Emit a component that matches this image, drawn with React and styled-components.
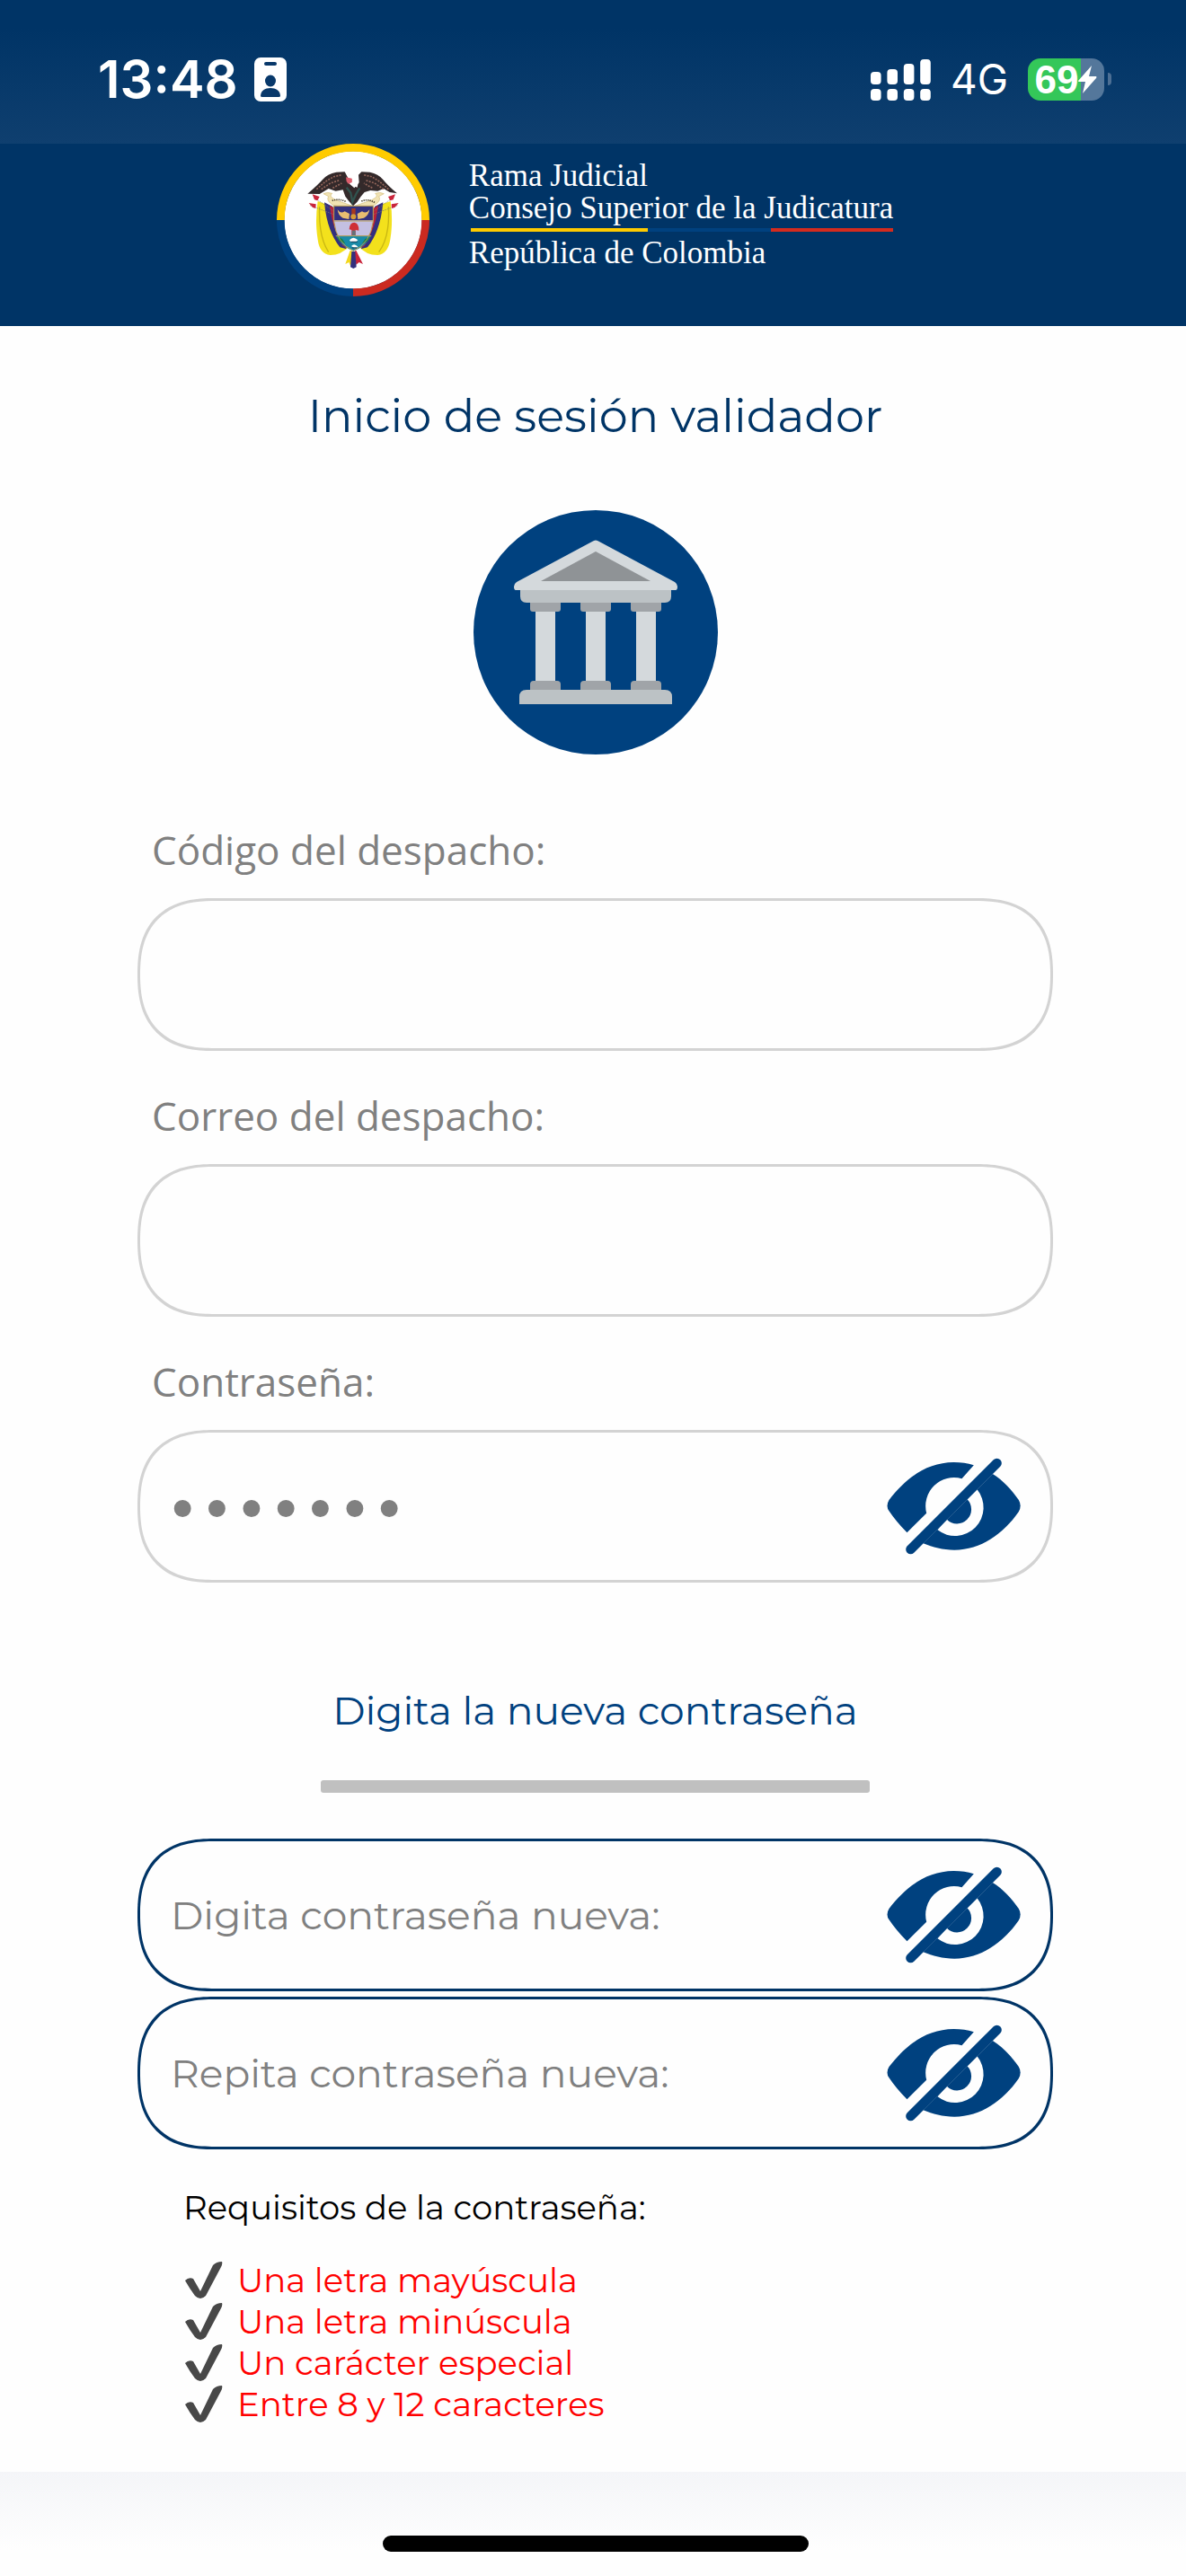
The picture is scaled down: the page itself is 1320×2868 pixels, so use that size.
import React, { useState } from "react";
import styled, { createGlobalStyle } from "styled-components";

const EstilosGlobales = createGlobalStyle`
  * {
    box-sizing: border-box;
  }

  body {
    margin: 0;
    background: #fefefe;
    font-family: Montserrat, Inter, "Liberation Sans", sans-serif;
  }
`;

const Pagina = styled.div`
  display: flex;
  flex-direction: column;
  min-height: 100vh;
`;

const BarraEstado = styled.div`
  display: flex;
  justify-content: space-between;
  align-items: center;
  height: 160px;
  padding: 16px 83px 0 109px;
  color: white;
  font-family: Inter, "Liberation Sans", sans-serif;
  background: linear-gradient(#003466 20%, #0f3f6f);
`;

const GrupoEstado = styled.div`
  display: flex;
  align-items: center;
  gap: ${({ separacion }) => separacion}px;
`;

const Hora = styled.span`
  font-size: 58px;
  font-weight: 600;
  line-height: 64px;
`;

const Red = styled.span`
  font-size: 46px;
  line-height: 56px;
`;

const Bateria = styled.div`
  display: flex;
  align-items: center;
  gap: 4px;

  &::after {
    content: "";
    width: 4px;
    height: 14px;
    border-radius: 0 4px 4px 0;
    background: #4d6f94;
  }
`;

const CuerpoBateria = styled.div`
  display: flex;
  align-items: center;
  justify-content: center;
  width: 85px;
  height: 47px;
  border-radius: 14px;
  font-family: "Liberation Sans", sans-serif;
  font-size: 44px;
  font-weight: 700;
  line-height: 47px;
  background: linear-gradient(to right, #34c759 69%, #54779b 69%);
`;

const Encabezado = styled.header`
  display: flex;
  justify-content: center;
  align-items: flex-start;
  gap: 44px;
  min-height: 203px;
  padding-right: 18px;
  color: white;
  background: #003466;
`;

const TextoInstitucional = styled.div`
  padding-top: 18px;
  font-family: "Palatino Linotype", Palatino, "Liberation Serif", serif;
  font-size: 35px;
  line-height: 36px;
`;

const Linea = styled.div``;

const Tricolor = styled.div`
  height: 4px;
  margin: 4px 0 6px 2px;
  background: linear-gradient(
    to right,
    #ffcb00 42%,
    #00417f 42%,
    #00417f 71%,
    #d52b1e 71%
  );
`;

const Contenido = styled.main`
  display: flex;
  flex-direction: column;
  padding: 70px 148px 52px 153px;
`;

const Titulo = styled.h1`
  margin: 0 0 75px;
  color: #003466;
  font-size: 51px;
  font-weight: 400;
  line-height: 60px;
  text-align: center;
`;

const Formulario = styled.form`
  display: flex;
  flex-direction: column;
`;

const Insignia = styled.div`
  display: flex;
  justify-content: center;
  margin-bottom: 76px;
`;

const Campo = styled.div`
  display: flex;
  flex-direction: column;
  gap: 24px;
  margin-bottom: 42px;
`;

const Etiqueta = styled.label`
  padding-left: 16px;
  color: #808080;
  font-family: "Open Sans", sans-serif;
  font-size: 44px;
  line-height: 60px;
`;

const Caja = styled.div`
  display: flex;
  align-items: center;
  height: 170px;
  padding: 0 33px 0 28px;
  border: 3px solid ${({ azul }) => (azul ? "#003466" : "#d3d3d3")};
  border-radius: 68px;
  background: #fefefe;

  @supports (corner-shape: superellipse(1.3)) {
    border-radius: 85px;
    corner-shape: superellipse(1.3);
  }
`;

const Entrada = styled.input`
  flex: 1;
  min-width: 0;
  height: 100%;
  padding: ${({ oculta }) => (oculta ? "8px 0 0" : "0 0 0 6px")};
  border: none;
  outline: none;
  background: transparent;
  color: #808080;
  font-family: ${({ oculta }) =>
    oculta ? `"DejaVu Sans", sans-serif` : "Montserrat, Inter, sans-serif"};
  font-size: ${({ oculta }) => (oculta ? 65 : 44)}px;

  &::placeholder {
    color: #808080;
    opacity: 1;
  }
`;

const BotonOjo = styled.button`
  display: flex;
  padding: 0;
  border: none;
  background: none;
  cursor: pointer;
`;

const Subtitulo = styled.h2`
  margin: 72px 0 50px;
  color: #00417f;
  font-size: 44px;
  font-weight: 400;
  line-height: 56px;
  text-align: center;
`;

const Separador = styled.hr`
  width: 60%;
  height: 14px;
  margin: 0 auto 51px;
  border: none;
  border-radius: 3px;
  background: #c0c0c0;
`;

const GrupoNueva = styled.div`
  display: flex;
  flex-direction: column;
  gap: 6px;
`;

const Requisitos = styled.section`
  padding: 42px 51px 0;
  font-size: 37px;
  line-height: 46px;
`;

const TituloRequisitos = styled.p`
  margin: 0 0 35px;
  color: black;
`;

const Lista = styled.ul`
  margin: 0;
  padding: 0 0 0 2px;
  list-style: none;
`;

const Requisito = styled.li`
  display: flex;
  align-items: center;
  gap: 16px;
  color: #ff0000;
`;

const Pie = styled.footer`
  display: flex;
  justify-content: center;
  align-items: flex-end;
  height: 116px;
  margin-top: auto;
  padding: 0 0 27px 6px;
  background: linear-gradient(#f4f5f8, #fefefe 75%);
`;

const IndicadorInicio = styled.div`
  width: 36%;
  height: 18px;
  border-radius: 9px;
  background: black;
`;

const IconoCredencial = () => (
  <svg width="36" height="49" viewBox="0 0 36 49">
    <rect width="36" height="49" rx="7" fill="white" />
    <rect x="11" y="5" width="14" height="4" rx="2" fill="#08386a" />
    <ellipse cx="18" cy="26" rx="6" ry="6.5" fill="#08386a" />
    <path d="M7 43C7 37 12 34 18 34S29 37 29 43Q29 44 27 44H9Q7 44 7 43Z" fill="#08386a" />
  </svg>
);

const alturas = [14, 17, 23, 28];

const IconoSenal = () => (
  <svg width="67" height="47" viewBox="0 0 67 47" fill="white">
    {alturas.map((alto, i) => (
      <g key={alto}>
        <rect x={i * 18.4} y={29 - alto} width="11.6" height={alto} rx="4" />
        <rect x={i * 18.4} y="34" width="11.6" height="13" rx="4" />
      </g>
    ))}
  </svg>
);

const IconoRayo = () => (
  <svg width="21" height="31" viewBox="0 0 21 31">
    <path d="M15 0 0 17Q0 18 1 18H8L5 31 20 14Q21 13 20 12H12Z" fill="white" />
  </svg>
);

const Escudo = () => (
  <svg width="170" height="170" viewBox="53 30 510 510" role="img" aria-label="Escudo de Colombia">
    <circle cx="308" cy="285" r="230" fill="white" />
    <g fill="none" strokeWidth="26">
      <path d="M66 285A242 242 0 0 1 550 285" stroke="#ffcb00" />
      <path d="M66 285A242 242 0 0 0 308 527" stroke="#00417f" />
      <path d="M550 285A242 242 0 0 1 308 527" stroke="#cb2a20" />
    </g>
    {/* banderas */}
    <path d="M190 222Q180 290 190 350 196 398 232 402 268 402 296 372L262 300 240 240Z" fill="#f3e11c" />
    <path d="M433 222Q442 290 432 350 424 398 390 402 350 402 326 372L356 300 380 240Z" fill="#f3e11c" />
    <path d="M196 240Q192 340 226 392M426 240Q432 340 394 392" fill="none" stroke="#c9b713" strokeWidth="4" />
    <path d="M212 226 240 240 254 320 286 382 264 376Q220 320 212 226Z" fill="#33307e" />
    <path d="M408 226 380 240 368 320 334 382 356 376Q400 320 408 226Z" fill="#33307e" />
    <path d="M230 236 246 246 258 326 288 378 274 372Q238 310 230 236Z" fill="#b92038" />
    <path d="M392 236 376 246 362 326 334 378 346 372Q384 310 392 236Z" fill="#b92038" />
    <path d="M298 386 282 432 294 426 300 440 308 390Z" fill="#f3d81c" />
    <path d="M318 386 341 432 328 426 318 434 312 390Z" fill="#c9243b" />
    <path d="M303 390H315L319 442 309 447 299 442Z" fill="#33307e" />
    {/* lanzas */}
    <path d="M176 208 246 258M164 236 248 268M444 208 374 258M456 236 370 268" stroke="#777" strokeWidth="2" strokeDasharray="5 3" />
    <path d="M172 199 196 207 189 220 179 217ZM160 228 184 232 183 246 173 243ZM449 199 425 207 432 220 442 217ZM460 228 436 232 437 246 447 243Z" fill="#c9243b" />
    {/* cinta */}
    <path d="M209 197Q222 190 238 196 224 206 250 218L306 238 300 246 242 236Q216 220 226 206ZM411 197Q398 190 382 196 396 206 370 218L314 238 320 246 378 236Q404 220 394 206Z" fill="#f1e3b3" stroke="#d3bd7c" strokeWidth="2" />
    <path d="M238 220Q262 212 286 224M336 222Q358 212 382 228" fill="none" stroke="#4b422c" strokeWidth="5" strokeDasharray="4 3" />
    {/* blason */}
    <path d="M244 238H375V290Q366 362 309 388 252 362 244 290Z" fill="#c4c0e2" />
    <path d="M244 238H375V286H244Z" fill="#33307e" />
    <path d="M251 338H368Q350 374 309 388 270 374 251 338Z" fill="#188ba8" />
    <path d="M253 340 272 348 282 364 262 356ZM366 340 348 348 338 364 356 356Z" fill="#167f4f" />
    <path d="M244 238H375V290Q366 362 309 388 252 362 244 290ZM244 288H375M250 338H369" fill="none" stroke="#b69b52" strokeWidth="3" />
    <path d="M256 250Q266 266 280 256L296 264 294 282 274 278Q258 270 256 250ZM363 250Q352 266 338 256L322 264 324 282 344 278Q360 270 363 250Z" fill="#e8bd70" />
    <path d="M303 246H316V266H303Z" fill="#a93a1e" />
    <circle cx="309" cy="274" r="9" fill="#d79b35" />
    <path d="M295 316Q296 294 312 293 327 294 327 320L316 318V336H303V318Z" fill="#cf2f36" />
    <path d="M304 320H316V336H304Z" fill="#65717a" />
    <path d="M296 352Q308 336 324 352L318 358H300ZM302 372Q312 360 324 374L314 380Z" fill="white" />
    <path d="M300 356H322V360H300ZM304 376H320V380H304Z" fill="#184e66" />
    {/* condor */}
    <path d="M156 197Q190 168 206 150 222 130 252 125L280 124 292 146 296 164 312 178 328 160 326 134 336 124 364 125Q392 130 408 150 424 170 455 196L430 192 410 180 390 188 366 186 346 192 334 206 322 224 308 238 294 222 282 206 274 184 250 188 226 180 196 198Z" fill="#33292a" />
    <path d="M186 182 216 156 244 140 270 134M202 182 232 162 262 152M240 178 270 162M426 182 396 156 370 140 342 134M410 182 380 162 350 152M372 178 344 162" fill="none" stroke="#93665b" strokeWidth="5" strokeDasharray="6 4" />
    <path d="M286 176 300 194 306 224 318 198 330 178" fill="none" stroke="#31534e" strokeWidth="7" />
    <path d="M284 142 304 146 306 158 292 164 286 156Z" fill="#dc5e6d" />
    <path d="M304 152 326 156 322 176 306 170Z" fill="white" />
  </svg>
);

const columnas = [63, 119, 175];

const IconoPalacio = () => (
  <svg width="272" height="272" viewBox="0 0 272 272">
    <circle cx="136" cy="136" r="136" fill="#00417f" />
    <path d="M132 35Q136 32 140 35L224 80Q227 82 227 85 227 89 225 89H47Q45 89 45 85 45 82 48 80Z" fill="#d4d9dc" />
    <path d="M136 46 197 79H75Z" fill="#8f9396" />
    <path d="M52 89H220V96Q220 103 213 103H59Q52 103 52 96Z" fill="#bcc2c5" />
    {columnas.map((x) => (
      <g key={x}>
        <path d={`M${x} 103h34v7q0 3-3 3h-28q-3 0-3-3z`} fill="#a0a4a8" />
        <rect x={x + 6} y="113" width="22" height="77" fill="#d4d9dc" />
        <path d={`M${x} 200v-6q0-4 4-4h26q4 0 4 4v6z`} fill="#a0a4a8" />
      </g>
    ))}
    <path d="M51 216V208Q51 200 59 200H213Q221 200 221 208V216Z" fill="#bcc2c5" />
  </svg>
);

const IconoOjo = () => (
  <svg width="149" height="108" viewBox="137 188 446 324">
    <path
      d="M427 213C405 206 385 203 360 203C270 204 203 253 144 329Q132 349 144 366Q168 402 204 438L269 373A95 95 0 0 1 387 258Z"
      fill="#00417f"
    />
    <path
      d="M490 242C524 263 552 294 577 329Q588 348 577 368C526 442 450 496 362 496C323 496 290 487 258 474Z"
      fill="#00417f"
    />
    <path d="M438 294A95 95 0 0 1 306 429L337 394A47 47 0 0 0 405 327Z" fill="#fefefe" />
    <path d="M504 206 216 494" stroke="#00417f" strokeWidth="32" strokeLinecap="round" />
  </svg>
);

const IconoCheck = () => (
  <svg width="42" height="42" viewBox="0 0 42 42">
    <path
      d="M0 21Q4 17 9 19L17 33 31 4Q35 0 41 0 42 2 40 6L23 38Q17 44 11 38Q5 30 0 21Z"
      fill="#484848"
    />
  </svg>
);

const requisitos = [
  "Una letra mayúscula",
  "Una letra minúscula",
  "Un carácter especial",
  "Entre 8 y 12 caracteres",
];

const CajaClave = ({ id, azul, valor, onChange, placeholder }) => {
  const [visible, setVisible] = useState(false);

  return (
    <Caja azul={azul ? 1 : undefined}>
      <Entrada
        id={id}
        name={id}
        type={visible ? "text" : "password"}
        oculta={!visible && valor ? 1 : undefined}
        value={valor}
        onChange={onChange}
        placeholder={placeholder}
        aria-label={placeholder}
      />
      <BotonOjo
        type="button"
        aria-label="Mostrar contraseña"
        onClick={() => setVisible(!visible)}
      >
        <IconoOjo />
      </BotonOjo>
    </Caja>
  );
};

const App = () => {
  const [campos, setCampos] = useState({
    codigo: "",
    correo: "",
    clave: "1234567",
    nueva: "",
    repetida: "",
  });

  const onChange = (e) =>
    setCampos({ ...campos, [e.target.name]: e.target.value });

  return (
    <Pagina>
      <EstilosGlobales />
      <BarraEstado>
        <GrupoEstado separacion={18}>
          <Hora>13:48</Hora>
          <IconoCredencial />
        </GrupoEstado>
        <GrupoEstado separacion={22}>
          <IconoSenal />
          <Red>4G</Red>
          <Bateria>
            <CuerpoBateria>
              69
              <IconoRayo />
            </CuerpoBateria>
          </Bateria>
        </GrupoEstado>
      </BarraEstado>
      <Encabezado>
        <Escudo />
        <TextoInstitucional>
          <Linea>Rama Judicial</Linea>
          <Linea>Consejo Superior de la Judicatura</Linea>
          <Tricolor />
          <Linea>República de Colombia</Linea>
        </TextoInstitucional>
      </Encabezado>
      <Contenido>
        <Titulo>Inicio de sesión validador</Titulo>
        <Insignia>
          <IconoPalacio />
        </Insignia>
        <Formulario onSubmit={(e) => e.preventDefault()}>
          <Campo>
            <Etiqueta htmlFor="codigo">Código del despacho:</Etiqueta>
            <Caja>
              <Entrada
                id="codigo"
                name="codigo"
                type="text"
                value={campos.codigo}
                onChange={onChange}
              />
            </Caja>
          </Campo>
          <Campo>
            <Etiqueta htmlFor="correo">Correo del despacho:</Etiqueta>
            <Caja>
              <Entrada
                id="correo"
                name="correo"
                type="email"
                value={campos.correo}
                onChange={onChange}
              />
            </Caja>
          </Campo>
          <Campo>
            <Etiqueta htmlFor="clave">Contraseña:</Etiqueta>
            <CajaClave id="clave" valor={campos.clave} onChange={onChange} />
          </Campo>
          <Subtitulo>Digita la nueva contraseña</Subtitulo>
          <Separador />
          <GrupoNueva>
            <CajaClave
              id="nueva"
              azul
              valor={campos.nueva}
              onChange={onChange}
              placeholder="Digita contraseña nueva:"
            />
            <CajaClave
              id="repetida"
              azul
              valor={campos.repetida}
              onChange={onChange}
              placeholder="Repita contraseña nueva:"
            />
          </GrupoNueva>
          <Requisitos>
            <TituloRequisitos>Requisitos de la contraseña:</TituloRequisitos>
            <Lista>
              {requisitos.map((requisito) => (
                <Requisito key={requisito}>
                  <IconoCheck />
                  {requisito}
                </Requisito>
              ))}
            </Lista>
          </Requisitos>
        </Formulario>
      </Contenido>
      <Pie>
        <IndicadorInicio />
      </Pie>
    </Pagina>
  );
};

export default App;
